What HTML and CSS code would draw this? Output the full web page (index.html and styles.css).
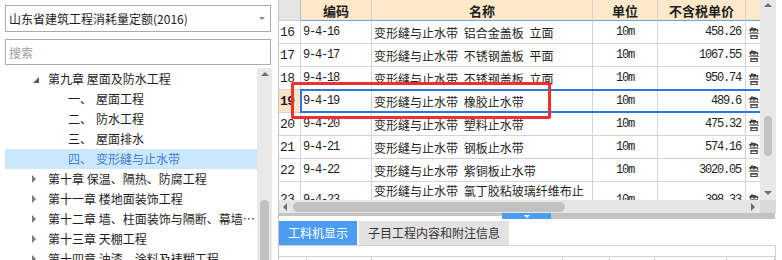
FILE: index.html
```html
<!DOCTYPE html>
<html lang="zh-CN">
  <head>
    <meta charset="UTF-8" />
    <meta name="viewport" content="width=device-width, initial-scale=1.0" />
    <title>定额库</title>
    <link rel="stylesheet" href="styles.css">
  </head>
  <body>
    <div class="app">
      <aside class="side">
        <div class="select">山东省建筑工程消耗量定额(2016)<span class="caret"></span></div>
        <div class="search">搜索</div>
        <div class="tree-box">
          <ul class="tree">
            <li class="node"><i class="tw open"></i>第九章 屋面及防水工程</li>
            <li class="leaf"><span class="num">一、</span>屋面工程</li>
            <li class="leaf"><span class="num">二、</span>防水工程</li>
            <li class="leaf"><span class="num">三、</span>屋面排水</li>
            <li class="leaf active"><span class="num">四、</span>变形缝与止水带</li>
            <li class="node"><i class="tw"></i>第十章 保温、隔热、防腐工程</li>
            <li class="node"><i class="tw"></i>第十一章 楼地面装饰工程</li>
            <li class="node"><i class="tw"></i>第十二章 墙、柱面装饰与隔断、幕墙工程</li>
            <li class="node"><i class="tw"></i>第十三章 天棚工程</li>
            <li class="node"><i class="tw"></i>第十四章 油漆、涂料及裱糊工程</li>
          </ul>
          <div class="tree-bar">
            <span class="up"></span>
            <span class="thumb"></span>
          </div>
        </div>
      </aside>

      <main class="main">
        <div class="grid-area">
          <div class="grid">
            <div class="row head">
              <div class="cell rn"></div>
              <div class="cell">编码</div>
              <div class="cell">名称</div>
              <div class="cell">单位</div>
              <div class="cell">不含税单价</div>
              <div class="cell"></div>
            </div>
            <div class="row">
              <div class="cell rn">16</div>
              <div class="cell code">9-4-16</div>
              <div class="cell name">变形缝与止水带 铝合金盖板 立面</div>
              <div class="cell unit">10m</div>
              <div class="cell price">458.26</div>
              <div class="cell lib">鲁建</div>
            </div>
            <div class="row">
              <div class="cell rn">17</div>
              <div class="cell code">9-4-17</div>
              <div class="cell name">变形缝与止水带 不锈钢盖板 平面</div>
              <div class="cell unit">10m</div>
              <div class="cell price">1067.55</div>
              <div class="cell lib">鲁建</div>
            </div>
            <div class="row">
              <div class="cell rn">18</div>
              <div class="cell code">9-4-18</div>
              <div class="cell name">变形缝与止水带 不锈钢盖板 立面</div>
              <div class="cell unit">10m</div>
              <div class="cell price">950.74</div>
              <div class="cell lib">鲁建</div>
            </div>
            <div class="row sel">
              <div class="cell rn">19</div>
              <div class="cell code">9-4-19</div>
              <div class="cell name">变形缝与止水带 橡胶止水带</div>
              <div class="cell unit">10m</div>
              <div class="cell price">489.6</div>
              <div class="cell lib">鲁建</div>
            </div>
            <div class="row">
              <div class="cell rn">20</div>
              <div class="cell code">9-4-20</div>
              <div class="cell name">变形缝与止水带 塑料止水带</div>
              <div class="cell unit">10m</div>
              <div class="cell price">475.32</div>
              <div class="cell lib">鲁建</div>
            </div>
            <div class="row">
              <div class="cell rn">21</div>
              <div class="cell code">9-4-21</div>
              <div class="cell name">变形缝与止水带 钢板止水带</div>
              <div class="cell unit">10m</div>
              <div class="cell price">574.16</div>
              <div class="cell lib">鲁建</div>
            </div>
            <div class="row">
              <div class="cell rn">22</div>
              <div class="cell code">9-4-22</div>
              <div class="cell name">变形缝与止水带 紫铜板止水带</div>
              <div class="cell unit">10m</div>
              <div class="cell price">3020.05</div>
              <div class="cell lib">鲁建</div>
            </div>
            <div class="row tall">
              <div class="cell rn">23</div>
              <div class="cell code">9-4-23</div>
              <div class="cell name">变形缝与止水带 氯丁胶粘玻璃纤维布止水带</div>
              <div class="cell unit">10m</div>
              <div class="cell price">398.33</div>
              <div class="cell lib">鲁建</div>
            </div>
          </div>
          <div class="grid-bar">
            <span class="up"></span>
            <span class="thumb"></span>
            <span class="down"></span>
          </div>
          <div class="mark"></div>
        </div>

        <div class="hbar">
          <div class="htrack">
            <span class="left"></span>
            <span class="hthumb"></span>
            <span class="right"></span>
          </div>
          <div class="corner"></div>
        </div>

        <div class="splitter">
          <div class="split-line"></div>
          <div class="split-btn"><span></span></div>
          <div class="split-rest"></div>
        </div>

        <div class="tabs">
          <div class="tab on">工料机显示</div>
          <div class="tab">子目工程内容和附注信息</div>
        </div>

        <div class="sub-grid">
          <div class="sub-head">
            <div></div><div></div><div></div><div></div><div></div><div></div><div></div>
          </div>
        </div>
      </main>
    </div>
  </body>
</html>
```

FILE: styles.css
```css
body {
  margin: 0;
  width: 782px;
  height: 260px;
  overflow: hidden;
  background: #fff;
  font-family: "Noto Sans CJK SC", sans-serif;
  font-size: 12px;
  color: #1e1e1e;
}
.app {
  display: flex;
  height: 260px;
}

/* left side */
.side {
  width: 278px;
  padding: 5px 0 0 5px;
  box-sizing: border-box;
}
.select,
.search {
  width: 266px;
  box-sizing: border-box;
  border: 1px solid #ababab;
  padding-left: 3px;
  display: flex;
  align-items: center;
}
.select {
  height: 27px;
  font-size: 12px;
  justify-content: space-between;
  padding-right: 5px;
}
.caret {
  width: 0;
  height: 0;
  border-style: solid;
  border-width: 3px 3px 0 3px;
  border-color: #8a8a8a transparent transparent transparent;
}
.search {
  height: 26px;
  margin-top: 7px;
  color: #9d9d9d;
}
.tree-box {
  display: flex;
  margin-top: 3px;
  height: 200px;
}
.tree {
  list-style: none;
  margin: 0;
  padding: 1px 0 0;
  width: 252px;
}
.tree li {
  height: 20px;
  line-height: 20px;
  white-space: nowrap;
  overflow: hidden;
  text-overflow: ellipsis;
}
.node {
  padding-left: 27px;
}
.leaf {
  padding-left: 63px;
}
.leaf .num {
  display: inline-block;
  width: 28px;
}
.leaf.active {
  background: #cce8ff;
  color: #3d7fd6;
}
.tw {
  display: inline-block;
  width: 16px;
  height: 20px;
  vertical-align: top;
  position: relative;
}
.tw::before {
  content: "";
  position: absolute;
  left: 0;
  top: 6px;
  border-style: solid;
  border-width: 4px 0 4px 4px;
  border-color: transparent transparent transparent #7b7b7b;
}
.tw.open::before {
  left: 1px;
  top: 8px;
  border-width: 0 0 6px 6px;
  border-color: transparent transparent #5c5c5c transparent;
}
.tree-bar {
  width: 15px;
  background: #e9e9e9;
  display: flex;
  flex-direction: column;
  align-items: center;
}
.tree-bar .up,
.grid-bar .up {
  margin-top: 4px;
  border-style: solid;
  border-width: 0 4px 4px 4px;
  border-color: transparent transparent #6e6e6e transparent;
}
.tree-bar .thumb {
  margin-top: 124px;
  width: 9px;
  height: 80px;
  background: #c1c1c1;
  border-radius: 5px 5px 0 0;
}

/* right side */
.main {
  width: 498px;
  border-left: 1px solid #c6c6c6;
  box-sizing: border-box;
}
.grid-area {
  position: relative;
  display: flex;
  height: 200px;
}
.grid {
  width: 481px;
  overflow: hidden;
}
.row {
  display: grid;
  grid-template-columns: 22px 71px 221px 65px 88px 60px;
  width: 527px;
  height: 23px;
  position: relative;
}
.cell {
  box-sizing: border-box;
  border-right: 1px solid #d3d3d3;
  border-bottom: 1px solid #d3d3d3;
  display: flex;
  align-items: center;
  overflow: hidden;
  white-space: nowrap;
}
.head {
  height: 21px;
}
.head .cell {
  background: #fde8c9;
  border-bottom-color: #6fa4dc;
  justify-content: center;
  font-weight: bold;
  font-size: 13px;
}
.head .cell.rn {
  background: #e4e4e4;
  border-bottom-color: #cfcfcf;
  border-right-color: #b9b9b9;
}
.rn {
  font-family: "Liberation Mono", monospace;
  font-size: 13px;
  padding-left: 1px;
  letter-spacing: -0.5px;
}
.code,
.unit,
.price {
  font-family: "Liberation Mono", monospace;
  font-size: 12px;
  letter-spacing: -1.2px;
}
.code {
  padding-left: 2px;
}
.unit {
  justify-content: center;
}
.price {
  justify-content: flex-end;
  padding-right: 4px;
}
.name {
  padding-left: 2px;
  word-spacing: 3px;
}
.lib {
  padding-left: 2px;
}
.sel .rn {
  background: #fce5c6;
  font-weight: bold;
}
.sel::after {
  content: "";
  position: absolute;
  left: 21px;
  top: -1px;
  right: 0;
  height: 24px;
  box-sizing: border-box;
  border: 2px solid #2a77e3;
  border-right: none;
}
.tall {
  height: 36px;
}
.tall .name {
  white-space: normal;
  line-height: 15px;
  align-items: flex-start;
  padding-top: 1px;
}
.grid-bar {
  width: 16px;
  background: #e8e8e8;
  display: flex;
  flex-direction: column;
  align-items: center;
}
.grid-bar .up {
  margin-top: 3px;
}
.grid-bar .thumb {
  margin-top: 109px;
  width: 8px;
  height: 40px;
  background: #c2c2c2;
  border-radius: 4px;
}
.grid-bar .down {
  margin-top: auto;
  margin-bottom: 5px;
  border-style: solid;
  border-width: 4px 4px 0 4px;
  border-color: #6e6e6e transparent transparent transparent;
}
.mark {
  position: absolute;
  left: 12px;
  top: 82px;
  width: 260px;
  height: 37px;
  box-sizing: border-box;
  border: 3px solid #f0302c;
  border-radius: 2px;
}

.hbar {
  display: flex;
  height: 13px;
}
.htrack {
  width: 481px;
  background: #e6e6e6;
  display: flex;
  align-items: center;
}
.htrack .left {
  margin-left: 4px;
  border-style: solid;
  border-width: 4px 4px 4px 0;
  border-color: transparent #6e6e6e transparent transparent;
}
.hthumb {
  margin-left: 6px;
  width: 272px;
  height: 10px;
  background: #c2c2c2;
  border-radius: 5px;
}
.htrack .right {
  margin-left: auto;
  margin-right: 5px;
  border-style: solid;
  border-width: 4px 0 4px 4px;
  border-color: transparent transparent transparent #6e6e6e;
}
.corner {
  width: 16px;
  background: #dadada;
}

.splitter {
  display: flex;
  height: 6px;
}
.split-line {
  width: 223px;
  border-top: 3px solid #c3c3c3;
}
.split-btn {
  width: 49px;
  background: #4c9cf4;
  display: flex;
  justify-content: center;
  align-items: center;
}
.split-btn span {
  border-style: solid;
  border-width: 3px 3px 0 3px;
  border-color: #fff transparent transparent transparent;
}
.split-rest {
  width: 224px;
  background: #c3c3c3;
}

.tabs {
  display: flex;
  gap: 2px;
  margin-top: 2px;
  height: 24px;
}
.tab {
  padding: 0 9px;
  line-height: 24px;
  background: #e2e2e2;
  color: #333;
}
.tab.on {
  background: #4c9cf4;
  color: #fff;
}
.sub-grid {
  width: 497px;
  height: 20px;
  box-sizing: border-box;
  border-top: 1px solid #d3d3d3;
  border-right: 1px solid #d3d3d3;
  padding-top: 10px;
}
.sub-head {
  display: grid;
  grid-template-columns: 28px 65px 191px 47px 45px 72px 48px;
  height: 10px;
  border-top: 1px solid #d3d3d3;
}
.sub-head div {
  border-right: 1px solid #d3d3d3;
}
```
